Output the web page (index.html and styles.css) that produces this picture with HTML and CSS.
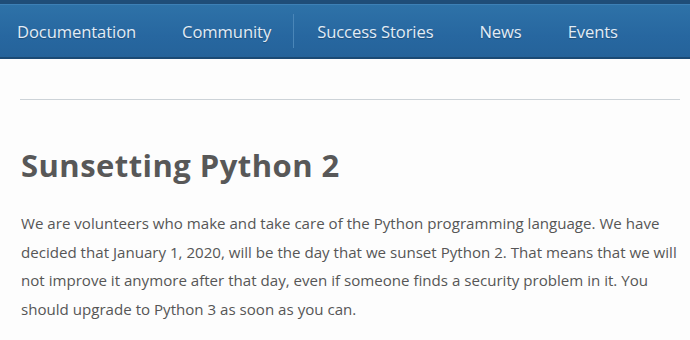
FILE: index.html
```html
<!DOCTYPE html>
<html>
<head>
<meta charset="utf-8">
<link rel="stylesheet" href="styles.css">
</head>
<body>
<div class="topstrip"></div>
<nav class="nav">
  <a class="item">Documentation</a>
  <a class="item">Community</a>
  <span class="sep"></span>
  <a class="item">Success Stories</a>
  <a class="item">News</a>
  <a class="item">Events</a>
</nav>
<main class="content">
  <hr class="rule">
  <h1 class="title">Sunsetting Python 2</h1>
  <p class="text">We are volunteers who make and take care of the Python programming language. We have decided that January 1, 2020, will be the day that we sunset Python 2. That means that we will not improve it anymore after that day, even if someone finds a security problem in it. You should upgrade to Python 3 as soon as you can.</p>
</main>
</body>
</html>
```
FILE: styles.css
```css
html, body { margin: 0; padding: 0; background: #fdfdfd; }
body { font-family: "Open Sans", "Noto Sans", sans-serif; color: #555; overflow: hidden; }
.topstrip { height: 4px; background: #1f4d78; }
.nav {
  height: 52px;
  display: flex;
  align-items: center;
  background: linear-gradient(#2e72a8, #2767a0 60%, #25639a);
  border-top: 1px solid #3d80b6;
  border-bottom: 2px solid #1b4a74;
  padding-left: 17px;
}
.item {
  color: #e2ecf6;
  font-size: 16.6px;
  margin-right: 46px;
  text-shadow: 0 1px 1px rgba(0,0,0,0.25);
  letter-spacing: -0.1px;
}
.sep {
  width: 1px;
  height: 34px;
  background: #4a86b8;
  margin-left: -24px;
  margin-right: 23px;
}
.content { padding: 40px 10px 0 20px; }
.rule { border: 0; border-top: 1px solid #cdd3d8; margin: 0; }
.title {
  margin: 45px 0 0 1px;
  font-size: 31px;
  font-weight: 700;
  letter-spacing: 0.45px;
  color: #585858;
  line-height: 40px;
}
.text {
  margin: 24px 0 0 1px;
  font-size: 15.1px;
  line-height: 28.5px;
  color: #565656;
}
```
